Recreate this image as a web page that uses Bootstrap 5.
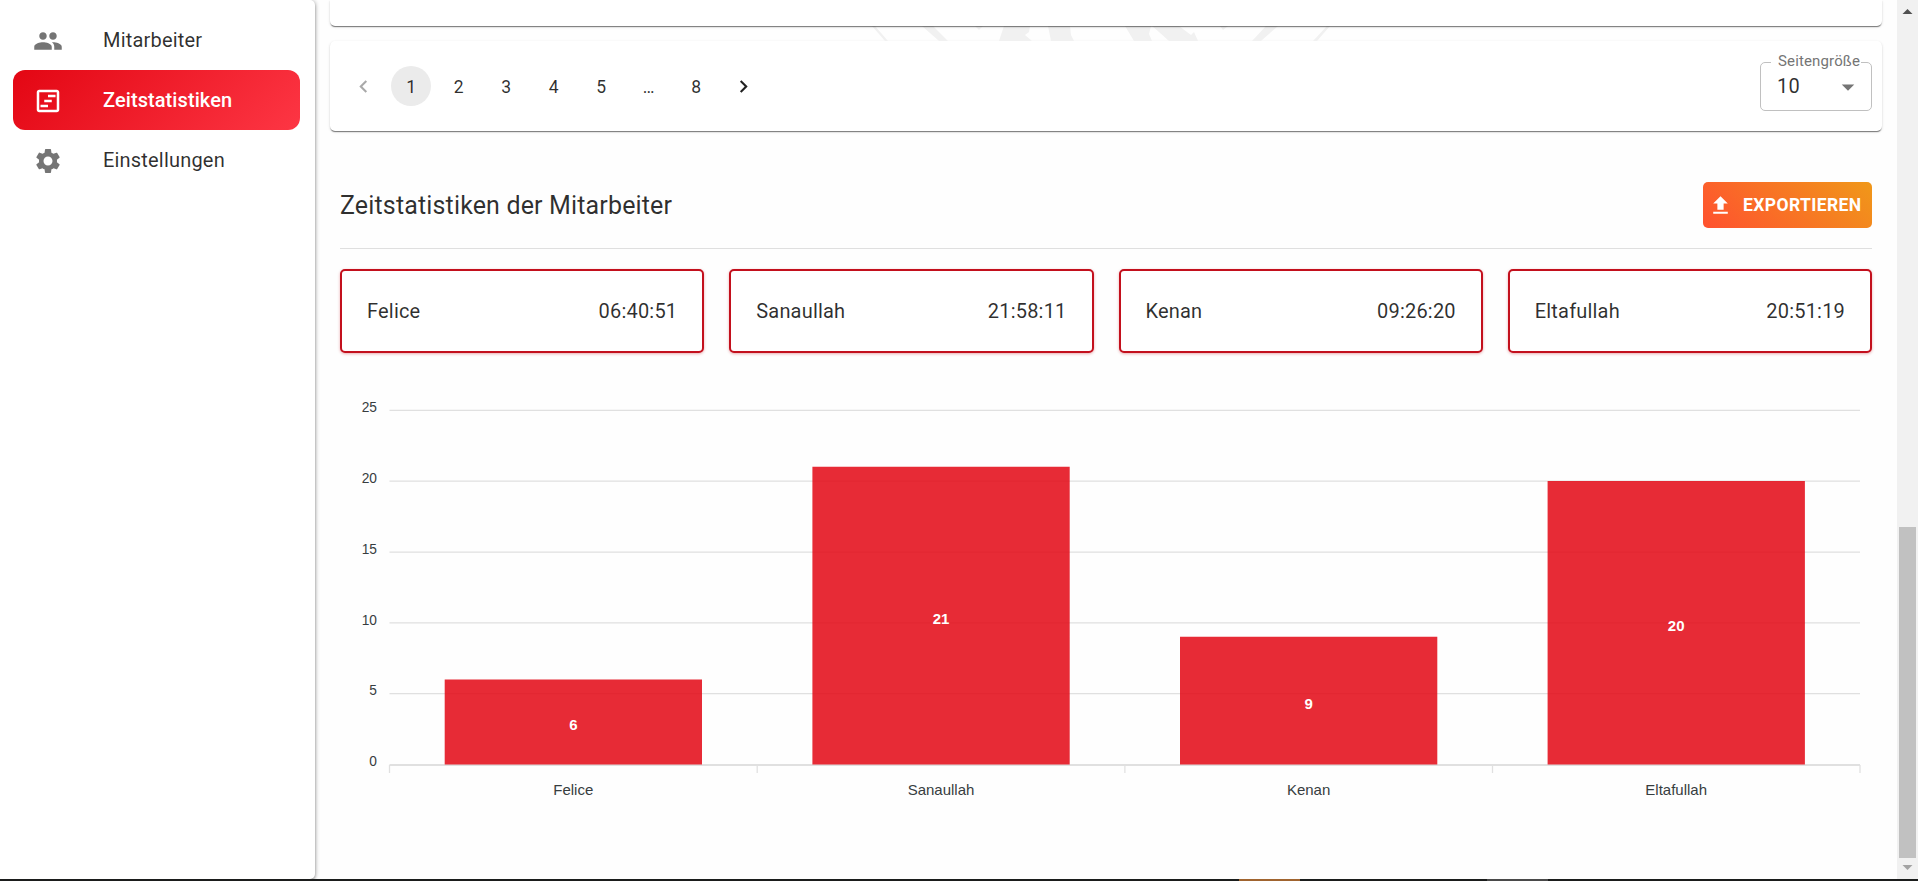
<!DOCTYPE html>
<html lang="de">
<head>
<meta charset="utf-8">
<title>Zeitstatistiken</title>
<link href="https://cdn.jsdelivr.net/npm/bootstrap@5.3.0/dist/css/bootstrap.min.css" rel="stylesheet">
<style>
body{font-family:Roboto,"Liberation Sans",sans-serif;font-size:20px;letter-spacing:.1876px;color:rgba(0,0,0,.82);background:#fefefe;line-height:30px}
.app-shell{height:881px}
.main-row{height:879px}
.side-panel{width:315px;padding:10px 15px 0 13px;background:#fff;border-radius:0 5px 5px 0;box-shadow:0 2px 3px rgba(0,0,0,.3),1px 0 4px rgba(0,0,0,.22)}
.side-link{height:60px;padding-left:20px;border-radius:12px;color:inherit;text-decoration:none}
.side-link svg{width:30px;height:30px;fill:#757575;margin:1px 40px 0 0}
.side-link.current{background:linear-gradient(135deg,#e30613 0%,#fd3644 100%);color:#fff;font-weight:500;letter-spacing:.08px}
.side-link.current svg{fill:#fff}
.content-area{padding:0 15px}
.paper{background:#fff;border-radius:5px;box-shadow:0 2px 1px -1px rgba(0,0,0,.35),0 1px 1px rgba(0,0,0,.2),0 1px 3px rgba(0,0,0,.12)}
.paper-top{height:26px;border-radius:0 0 5px 5px;position:relative;z-index:1}
.emblem{height:15px}
.paper-pages{height:90px;padding:0 10px}
.page-no{width:40px;height:40px;margin:0 3.75px;font-size:17.5px;border-radius:50%;letter-spacing:.15px;padding-top:1px}
.page-no.current{background:#ebebeb}
.size-field{width:112px;height:49px;margin:1px 0 0;position:relative;border:1px solid #c0c0c0;border-radius:5px;padding:0 8px 0 16px}
.size-field .caption-text{position:absolute;left:10px;top:-17px;background:linear-gradient(#fff,#fff) no-repeat 0 16px/100% 2px;padding:0 1px 0 7px;font-size:15px;letter-spacing:.14px;color:#757575}
.size-field .value-text{padding-bottom:1px}
.stats{padding:0 10px}
.stats-head{height:118px;padding-top:31px;border-bottom:1px solid #dfdfdf}
.stats-head h1{font-size:25px;font-weight:400;letter-spacing:.15px;line-height:40px;padding-top:2px}
.btn-export{width:169px;height:46px;border:0;border-radius:5px;padding:0 0 0 5px;font-size:17.5px;font-weight:700;letter-spacing:.4px;color:#fff;background:linear-gradient(45deg,#ff512f,#f09819)}
.btn-export svg{margin-right:10px}
.time-row{gap:25px;margin-top:20px}
.time-card{height:84px;border:2px solid #c3101d;border-radius:5px;padding:0 25px;background:#fff;box-shadow:0 1px 3px rgba(195,16,29,.35)}
.chart{display:block;width:1532px;height:460px;font-family:"Liberation Sans",Arial,sans-serif;font-size:15px;letter-spacing:0;fill:#373d3f}
.track{width:21px;background:#f1f1f1}
.thumb{width:17px;height:331px;background:#c1c1c1;margin-top:503px}
.taskbar{height:2px;background:#1b1d1c}
</style>
</head>
<body class="overflow-hidden">
<div class="app-shell d-flex flex-column">
<div class="main-row d-flex">
  <nav class="side-panel flex-shrink-0 d-flex flex-column">
    <a class="side-link d-flex align-items-center" href="#"><svg viewBox="0 0 24 24"><path d="M16 11c1.660 0 2.990-1.340 2.990-3S17.660 5 16 5c-1.660 0-3 1.340-3 3s1.340 3 3 3zm-8 0c1.660 0 2.990-1.340 2.990-3S9.660 5 8 5C6.340 5 5 6.340 5 8s1.340 3 3 3zm0 2c-2.330 0-7 1.170-7 3.500V19h14v-2.500c0-2.330-4.670-3.500-7-3.500zm8 0c-.29 0-.62.020-.97.050 1.160.840 1.970 1.970 1.970 3.450V19h6v-2.500c0-2.330-4.670-3.500-7-3.500z"/></svg>Mitarbeiter</a>
    <a class="side-link current d-flex align-items-center" href="#"><svg viewBox="0 0 24 24"><path d="M19 5v14H5V5h14m0-2H5c-1.100 0-2 .9-2 2v14c0 1.100.9 2 2 2h14c1.100 0 2-.9 2-2V5c0-1.100-.9-2-2-2z"/><path d="M12 7h6v2h-6zM9 11h6v2H9zM6 15h6v2H6z"/></svg>Zeitstatistiken</a>
    <a class="side-link d-flex align-items-center" href="#"><svg viewBox="0 0 24 24"><path d="M19.140 12.940c.040-.3.060-.610.060-.940 0-.320-.020-.640-.070-.940l2.030-1.580c.180-.140.230-.410.120-.610l-1.920-3.320c-.120-.220-.370-.290-.590-.220l-2.390.960c-.5-.380-1.030-.7-1.620-.940l-.360-2.540c-.040-.240-.240-.410-.480-.410h-3.840c-.240 0-.430.170-.470.410l-.360 2.540c-.590.240-1.130.570-1.620.940l-2.390-.960c-.220-.080-.470 0-.590.220L2.740 8.870c-.120.210-.080.470.120.610l2.030 1.580c-.050.3-.090.630-.090.940s.020.640.070.940l-2.030 1.580c-.180.140-.230.410-.120.610l1.920 3.320c.120.220.370.290.590.220l2.390-.960c.5.380 1.030.7 1.620.940l.360 2.540c.050.240.240.410.480.410h3.840c.240 0 .440-.170.470-.410l.360-2.540c.590-.240 1.130-.560 1.620-.940l2.390.960c.220.080.470 0 .590-.220l1.920-3.320c.120-.220.070-.470-.120-.610l-2.010-1.580zM12 15.600c-1.980 0-3.600-1.620-3.600-3.600s1.620-3.600 3.600-3.600 3.600 1.620 3.600 3.600-1.620 3.600-3.600 3.600z"/></svg>Einstellungen</a>
  </nav>
  <main class="content-area flex-grow-1">
    <div class="paper paper-top"></div>
    <svg class="emblem d-block w-100" viewBox="330 26 1552 15" fill="#f1f1f1"><path d="M872 26h3l13 15h-3zM922 26h11l15 15h-9zM975 26h8l-4 4zM1004 26h26l-1 6-4 3 7 6h-33zM1048 26h22l1 9 3 6h-23zM1125 26h26l-2 8 3 7h-18zM1152 26h27l12 9 3-3 4 9h-29l-10-9z"/><path d="M1220 26h8l-5 4zM1266 26h12l-17 15h-9zM1327 26h3l-13 15h-4z"/></svg>
    <section class="paper paper-pages d-flex align-items-center justify-content-between">
      <div class="d-flex">
        <span class="page-no d-flex align-items-center justify-content-center"><svg width="25" height="25" viewBox="0 0 24 24" fill="#a9a9a9"><path d="M15.410 7.410L14 6l-6 6 6 6 1.410-1.410L10.830 12z"/></svg></span>
        <span class="page-no current d-flex align-items-center justify-content-center">1</span>
        <span class="page-no d-flex align-items-center justify-content-center">2</span>
        <span class="page-no d-flex align-items-center justify-content-center">3</span>
        <span class="page-no d-flex align-items-center justify-content-center">4</span>
        <span class="page-no d-flex align-items-center justify-content-center">5</span>
        <span class="page-no d-flex align-items-center justify-content-center">…</span>
        <span class="page-no d-flex align-items-center justify-content-center">8</span>
        <span class="page-no d-flex align-items-center justify-content-center"><svg width="25" height="25" viewBox="0 0 24 24" fill="#212121"><path d="M10 6L8.590 7.410 13.170 12l-4.580 4.590L10 18l6-6z"/></svg></span>
      </div>
      <div class="size-field d-flex align-items-center justify-content-between">
        <span class="caption-text">Seitengröße</span><span class="value-text">10</span>
        <svg width="30" height="30" viewBox="0 0 24 24" fill="#757575"><path d="M7 10l5 5 5-5z"/></svg>
      </div>
    </section>
    <section class="stats">
      <div class="stats-head d-flex align-items-center justify-content-between">
        <h1 class="m-0">Zeitstatistiken der Mitarbeiter</h1>
        <button class="btn btn-export d-flex align-items-center" type="button"><svg width="25" height="25" viewBox="0 0 24 24" fill="#fff"><path d="M9 16h6v-6h4l-7-7-7 7h4zm-4 2h14v2H5z"/></svg>EXPORTIEREN</button>
      </div>
      <div class="time-row d-flex">
        <div class="time-card flex-fill w-100 d-flex align-items-center justify-content-between"><span>Felice</span><span>06:40:51</span></div>
        <div class="time-card flex-fill w-100 d-flex align-items-center justify-content-between"><span>Sanaullah</span><span>21:58:11</span></div>
        <div class="time-card flex-fill w-100 d-flex align-items-center justify-content-between"><span>Kenan</span><span>09:26:20</span></div>
        <div class="time-card flex-fill w-100 d-flex align-items-center justify-content-between"><span>Eltafullah</span><span>20:51:19</span></div>
      </div>
      <svg class="chart" viewBox="340 353 1532 460">
        <g stroke="#e0e0e0" stroke-width="1.250"><path d="M389.500 410.300H1860M389.500 481.200H1860M389.500 552H1860M389.500 622.800H1860M389.500 693.600H1860"/><path d="M389.500 765H1860" stroke-width="2"/><path d="M389.500 765v8M757.200 765v8M1124.900 765v8M1492.500 765v8M1860 765v8"/></g>
        <g fill="#e30613" fill-opacity=".85"><path d="M444.700 679.400h257.300v85h-257.300zM812.400 466.800h257.300v297.600h-257.300zM1180 636.800h257.300v127.600H1180zM1547.600 481h257.300v283.400h-257.300z"/></g>
        <g text-anchor="end" font-size="13.750"><text x="377" y="412">25</text><text x="377" y="483">20</text><text x="377" y="554">15</text><text x="377" y="625">10</text><text x="377" y="695">5</text><text x="377" y="766">0</text></g>
        <g text-anchor="middle"><text x="573.300" y="795">Felice</text><text x="941" y="795">Sanaullah</text><text x="1308.600" y="795">Kenan</text><text x="1676.200" y="795">Eltafullah</text></g>
        <g text-anchor="middle" fill="#fff" font-weight="700"><text x="573.300" y="730">6</text><text x="941" y="624">21</text><text x="1308.600" y="709">9</text><text x="1676.200" y="631">20</text></g>
      </svg>
    </section>
  </main>
  <div class="track flex-shrink-0 d-flex flex-column align-items-center">
    <svg class="flex-shrink-0" width="21" height="24"><path d="M5.500 14l5-5 5 5z" fill="#505050"/></svg>
    <div class="thumb flex-shrink-0"></div>
    <svg width="21" height="21"><path d="M5.500 7h10l-5 5z" fill="#a3a3a3"/></svg>
  </div>
</div>
<div class="taskbar d-flex"><span style="margin-left:1239px;width:61px;background:#a0642f"></span><span style="margin-left:187px;width:61px;background:#4a4a4a"></span></div>
</div>
<script src="https://cdn.jsdelivr.net/npm/bootstrap@5.3.0/dist/js/bootstrap.bundle.min.js"></script>
</body>
</html>
